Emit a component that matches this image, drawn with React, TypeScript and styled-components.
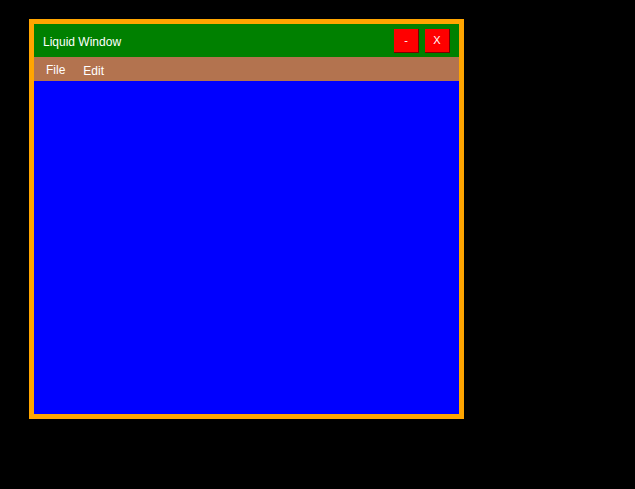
import styled, { createGlobalStyle } from 'styled-components';

const GlobalStyle = createGlobalStyle`
  html, body {
    margin: 0;
    padding: 0;
    background: #000;
  }
  body {
    font-family: "Liberation Sans", Arial, sans-serif;
    -webkit-font-smoothing: none;
  }
`;

const Desktop = styled.div`
  width: 635px;
  height: 489px;
  padding: 19px 0 0 29px;
  box-sizing: border-box;
  background: #000;
`;

const Window = styled.div`
  width: 435px;
  height: 400px;
  box-sizing: border-box;
  border: 5px solid #ffa500;
  display: flex;
  flex-direction: column;
  background: #0000ff;
`;

const TitleBar = styled.div`
  height: 33px;
  flex-shrink: 0;
  background: #008000;
  display: flex;
  align-items: center;
  padding: 0 9px 0 9px;
  color: #fff;
`;

const Title = styled.span`
  flex: 1;
  font-size: 12px;
  position: relative;
  top: 1px;
`;

const Controls = styled.div`
  display: flex;
  gap: 6px;
`;

const ControlButton = styled.button`
  width: 25px;
  height: 24px;
  padding: 0;
  border: none;
  border-right: 1px solid #7a0000;
  border-bottom: 1px solid #7a0000;
  background: #ff0000;
  color: #fff;
  font-family: "Liberation Sans", Arial, sans-serif;
  font-size: 11px;
  display: flex;
  align-items: center;
  justify-content: center;
  cursor: pointer;
`;

const MenuBar = styled.div`
  height: 24px;
  flex-shrink: 0;
  background: #b3734f;
  display: flex;
  align-items: center;
  padding: 0 0 0 12px;
  gap: 18px;
`;

const MenuItem = styled.span<{ $lift?: boolean }>`
  color: #fff;
  font-size: 12px;
  position: relative;
  top: ${(p) => (p.$lift ? '1px' : '2px')};
`;

const Content = styled.div`
  flex: 1;
  background: #0000ff;
`;

export default function App() {
  return (
    <>
      <GlobalStyle />
      <Desktop>
        <Window>
          <TitleBar>
            <Title>Liquid Window</Title>
            <Controls>
              <ControlButton>-</ControlButton>
              <ControlButton>X</ControlButton>
            </Controls>
          </TitleBar>
          <MenuBar>
            <MenuItem $lift>File</MenuItem>
            <MenuItem>Edit</MenuItem>
          </MenuBar>
          <Content />
        </Window>
      </Desktop>
    </>
  );
}
